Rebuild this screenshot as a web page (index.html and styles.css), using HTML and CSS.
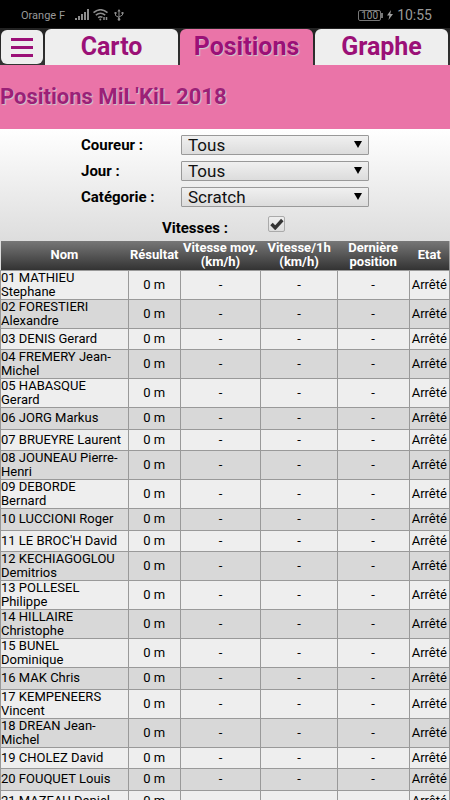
FILE: index.html
```html
<!doctype html>
<html lang="fr">
  <head>
    <meta charset="UTF-8" />
    <meta name="viewport" content="width=device-width, initial-scale=1.0" />
    <title>Positions MiL'KiL 2018</title>
    <link rel="stylesheet" href="styles.css">
  </head>
  <body>
    <div class="statusbar">
      <span class="operator">Orange F</span>
      <svg class="signal" width="15" height="12" viewBox="0 0 15 12" fill="#8c8c8c">
        <rect x="0" y="9" width="2" height="2" />
        <rect x="3" y="7" width="2" height="4" />
        <rect x="6" y="5" width="2" height="6" />
        <rect x="9" y="3" width="2" height="8" />
        <rect x="12" y="0" width="2" height="11" />
      </svg>
      <svg class="wifi" width="16" height="12" viewBox="0 0 16 12" fill="none" stroke="#8c8c8c" stroke-width="1.5">
        <path d="M.5 3.6Q7.5-2.2 14.5 3.6M2.8 6.2Q7.5 2.4 12.2 6.2M5.1 8.6Q7.5 6.8 9.5 8.4" />
        <circle cx="7.3" cy="10.4" r="1" fill="#8c8c8c" stroke="none" />
        <path d="M11 8v3M13.5 8v3" />
      </svg>
      <svg class="usb" width="10" height="12" viewBox="0 0 10 12" fill="none" stroke="#8c8c8c">
        <path d="M5 1v9M1.5 4v2.5L5 8.5M8.5 3.5v2.5L5 8" />
        <path d="M5 0l1.6 2.5H3.4zM.5 3h2v2h-2zM7.5 3h2v2h-2z" fill="#8c8c8c" stroke="none" />
        <circle cx="5" cy="10.4" r="1.3" fill="#8c8c8c" stroke="none" />
      </svg>
      <span class="battery">100</span>
      <svg class="bolt" width="6" height="10" viewBox="0 0 6 10" fill="#a0a0a0">
        <path d="M4 0L0 5.6h2.5L1.5 10 6 4H3.3z" />
      </svg>
      <span class="clock">10:55</span>
    </div>

    <nav class="tabs">
      <button class="menu" type="button" aria-label="Menu">
        <span></span>
        <span></span>
        <span></span>
      </button>
      <a class="tab" href="#carto">Carto</a>
      <a class="tab active" href="#positions">Positions</a>
      <a class="tab" href="#graphe">Graphe</a>
    </nav>

    <h1 class="title">Positions MiL'KiL 2018</h1>

    <form class="filters">
      <div class="fields">
        <label for="coureur">Coureur :</label>
        <div class="select">
          <select id="coureur"><option>Tous</option></select>
        </div>
        <label for="jour">Jour :</label>
        <div class="select">
          <select id="jour"><option>Tous</option></select>
        </div>
        <label for="categorie">Catégorie :</label>
        <div class="select">
          <select id="categorie"><option>Scratch</option></select>
        </div>
      </div>
      <div class="speeds">
        <label for="vitesses">Vitesses :</label>
        <div class="check">
          <input type="checkbox" id="vitesses" checked />
          <svg width="14" height="12" viewBox="0 0 14 12" fill="none" stroke="#333" stroke-width="3.4">
            <path d="M1.5 6l3.7 3.8L12.3 2" />
          </svg>
        </div>
      </div>
    </form>

    <table class="results">
      <colgroup>
        <col class="col-name" />
        <col class="col-result" />
        <col class="col-average" />
        <col class="col-hour" />
        <col class="col-last" />
        <col class="col-state" />
      </colgroup>
      <thead>
        <tr>
          <th>Nom</th>
          <th>Résultat</th>
          <th>Vitesse moy. (km/h)</th>
          <th>Vitesse/1h (km/h)</th>
          <th>Dernière position</th>
          <th>Etat</th>
        </tr>
      </thead>
      <tbody>
        <tr><td>01 MATHIEU<br>Stephane</td><td>0 m</td><td>-</td><td>-</td><td>-</td><td>Arrêté</td></tr>
        <tr><td>02 FORESTIERI<br>Alexandre</td><td>0 m</td><td>-</td><td>-</td><td>-</td><td>Arrêté</td></tr>
        <tr><td>03 DENIS Gerard</td><td>0 m</td><td>-</td><td>-</td><td>-</td><td>Arrêté</td></tr>
        <tr><td>04 FREMERY Jean-<br>Michel</td><td>0 m</td><td>-</td><td>-</td><td>-</td><td>Arrêté</td></tr>
        <tr><td>05 HABASQUE<br>Gerard</td><td>0 m</td><td>-</td><td>-</td><td>-</td><td>Arrêté</td></tr>
        <tr><td>06 JORG Markus</td><td>0 m</td><td>-</td><td>-</td><td>-</td><td>Arrêté</td></tr>
        <tr><td>07 BRUEYRE Laurent</td><td>0 m</td><td>-</td><td>-</td><td>-</td><td>Arrêté</td></tr>
        <tr><td>08 JOUNEAU Pierre-<br>Henri</td><td>0 m</td><td>-</td><td>-</td><td>-</td><td>Arrêté</td></tr>
        <tr><td>09 DEBORDE<br>Bernard</td><td>0 m</td><td>-</td><td>-</td><td>-</td><td>Arrêté</td></tr>
        <tr><td>10 LUCCIONI Roger</td><td>0 m</td><td>-</td><td>-</td><td>-</td><td>Arrêté</td></tr>
        <tr><td>11 LE BROC'H David</td><td>0 m</td><td>-</td><td>-</td><td>-</td><td>Arrêté</td></tr>
        <tr><td>12 KECHIAGOGLOU<br>Demitrios</td><td>0 m</td><td>-</td><td>-</td><td>-</td><td>Arrêté</td></tr>
        <tr><td>13 POLLESEL<br>Philippe</td><td>0 m</td><td>-</td><td>-</td><td>-</td><td>Arrêté</td></tr>
        <tr><td>14 HILLAIRE<br>Christophe</td><td>0 m</td><td>-</td><td>-</td><td>-</td><td>Arrêté</td></tr>
        <tr><td>15 BUNEL<br>Dominique</td><td>0 m</td><td>-</td><td>-</td><td>-</td><td>Arrêté</td></tr>
        <tr><td>16 MAK Chris</td><td>0 m</td><td>-</td><td>-</td><td>-</td><td>Arrêté</td></tr>
        <tr><td>17 KEMPENEERS<br>Vincent</td><td>0 m</td><td>-</td><td>-</td><td>-</td><td>Arrêté</td></tr>
        <tr><td>18 DREAN Jean-<br>Michel</td><td>0 m</td><td>-</td><td>-</td><td>-</td><td>Arrêté</td></tr>
        <tr><td>19 CHOLEZ David</td><td>0 m</td><td>-</td><td>-</td><td>-</td><td>Arrêté</td></tr>
        <tr><td>20 FOUQUET Louis</td><td>0 m</td><td>-</td><td>-</td><td>-</td><td>Arrêté</td></tr>
        <tr><td>21 MAZEAU Daniel</td><td>0 m</td><td>-</td><td>-</td><td>-</td><td>Arrêté</td></tr>
      </tbody>
    </table>
  </body>
</html>
```
FILE: styles.css
```css
* {
  box-sizing: border-box;
}
body {
  margin: 0;
  font-family: Roboto, sans-serif;
  font-size: 13px;
  color: #000;
  background: #ddd;
}

/* Phone status bar */
.statusbar {
  display: flex;
  align-items: center;
  height: 28px;
  padding: 2px 18px 0 21px;
  background: #000;
  color: #999;
  font-size: 11px;
}
.signal {
  margin-left: 10px;
}
.wifi {
  margin-left: 3px;
}
.usb {
  margin-left: 5px;
}
.battery {
  position: relative;
  margin-left: auto;
  padding: 0 2px;
  border: 1px solid #777;
  border-radius: 2px;
  font-size: 10px;
  line-height: 9px;
}
.battery::after {
  content: "";
  position: absolute;
  top: 2px;
  right: -3px;
  width: 2px;
  height: 5px;
  background: #777;
}
.bolt {
  margin: 0 4px 0 6px;
}
.clock {
  font-size: 14px;
}

/* Tabs */
.tabs {
  display: flex;
  gap: 2px;
  height: 37px;
  padding: 0 2px 0 1px;
  background: linear-gradient(#222, #333);
}
.menu {
  display: flex;
  flex-direction: column;
  align-items: center;
  justify-content: center;
  gap: 5px;
  width: 42px;
  height: 34px;
  margin: 2px 0 0;
  padding: 0;
  border: 0;
  border-radius: 6px;
  background: #eee;
}
.menu span {
  width: 22px;
  height: 3px;
  background: #9b1077;
}
.tab {
  flex: 1;
  margin-top: 1px;
  border-radius: 6px 6px 0 0;
  background: #eee;
  color: #9b1077;
  font-size: 25px;
  font-weight: bold;
  line-height: 36px;
  text-align: center;
  text-decoration: none;
}
.tab.active {
  background: #ea74a8;
  text-shadow: 1px 1px 1px #ccc;
}

.title {
  margin: 0;
  background: #ea74a8;
  color: #9b2077;
  font-size: 22px;
  line-height: 64px;
  text-shadow: 1px 1px 1px #ccc;
}

/* Filters */
.filters {
  padding: 6px 0 1px;
  background: linear-gradient(#fff, #ddd);
  font-size: 15px;
  font-weight: bold;
}
.fields {
  display: grid;
  grid-template-columns: 100px 188px;
  justify-content: center;
  align-items: center;
  row-gap: 6px;
}
.select {
  position: relative;
  height: 20px;
}
.select::after {
  content: "";
  position: absolute;
  top: 6px;
  right: 7px;
  border: 4px solid transparent;
  border-top: 7px solid #000;
  border-bottom: 0;
  pointer-events: none;
}
.select select {
  display: block;
  width: 100%;
  height: 20px;
  padding: 0 6px;
  border: 1px solid #999;
  border-radius: 1px;
  appearance: none;
  background: linear-gradient(#f0f0f0, #dcdcdc);
  color: #111;
  font-family: inherit;
  font-size: 17px;
  line-height: 17px;
}
.speeds {
  display: grid;
  grid-template-columns: 1fr 1fr;
  column-gap: 40px;
  padding: 9px 0 0 46px;
  line-height: 24px;
}
.speeds label {
  justify-self: end;
}
.check {
  position: relative;
  width: 17px;
  height: 17px;
}
.check input {
  display: block;
  width: 17px;
  height: 16px;
  margin: 0;
  border: 1px solid #aaa;
  border-radius: 2px;
  appearance: none;
  background: linear-gradient(#eee, #ddd);
}
.check svg {
  position: absolute;
  top: 2px;
  left: 2px;
  visibility: hidden;
  pointer-events: none;
}
.check input:checked + svg {
  visibility: visible;
}

/* Results */
.results {
  width: 100%;
  table-layout: fixed;
  border-collapse: collapse;
  line-height: 14px;
  text-align: center;
}
.col-name {
  width: 28.5%;
}
.col-result {
  width: 11.5%;
}
.col-average {
  width: 18%;
}
.col-hour {
  width: 17%;
}
.col-last {
  width: 16%;
}
.col-state {
  width: 9%;
}
.results thead tr {
  background: linear-gradient(#777, #333);
}
.results th {
  height: 29px;
  padding: 0;
  color: #fff;
}
.results td {
  height: 21px;
  padding: 0;
  border: 1px solid #999;
}
.results td:first-child {
  text-align: left;
}
.results tbody tr {
  background: #eee;
}
.results tbody tr:nth-child(even) {
  background: #d8d8d8;
}
.results tbody tr:nth-child(even) td {
  height: 22px;
}
```
